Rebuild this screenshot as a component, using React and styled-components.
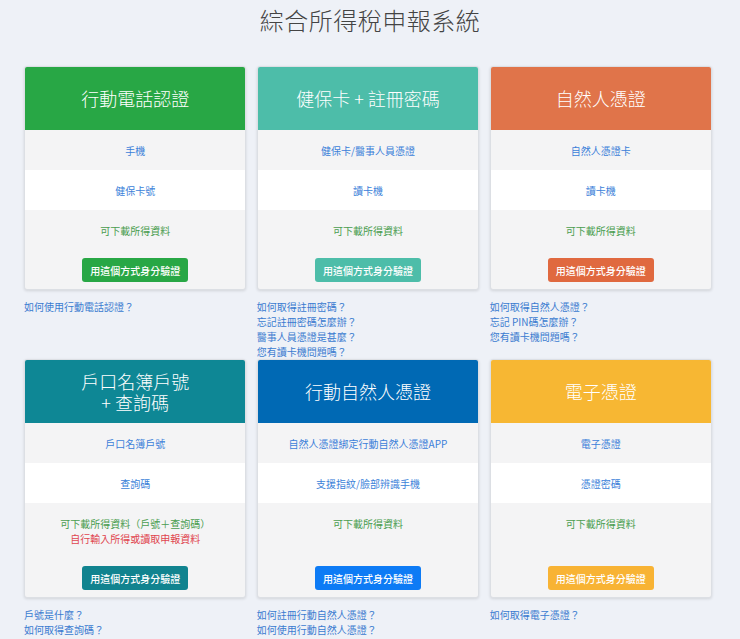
import React from "react";
import styled, { createGlobalStyle } from "styled-components";

const Global = createGlobalStyle`
  html, body { margin: 0; padding: 0; background: #eef1f7; }
  body { font-family: "Noto Sans CJK TC", "Noto Sans", sans-serif; }
`;

const Page = styled.div`
  width: 740px;
  min-height: 639px;
  background: #eef1f7;
  padding: 8px 0 0;
  box-sizing: border-box;
`;

const Title = styled.h1`
  margin: 0 0 34px;
  text-align: center;
  font-size: 24px;
  line-height: 24px;
  font-weight: 300;
  color: #444;
  letter-spacing: 0.5px;
`;

const Grid = styled.div`
  display: grid;
  grid-template-columns: repeat(3, 1fr);
  column-gap: 10.5px;
  width: 688px;
  margin-left: 24px;
`;

const Card = styled.div`
  display: flex;
  flex-direction: column;
  background: #f4f4f5;
  border: 1px solid #dcdfe4;
  border-radius: 3px;
  overflow: hidden;
  box-shadow: 0 1px 3px rgba(0, 0, 0, 0.12);
`;

const Header = styled.div`
  height: 63px;
  background: ${(p) => p.$color};
  color: #fff;
  display: flex;
  flex-direction: column;
  align-items: center;
  justify-content: center;
  text-align: center;
  font-size: 18px;
  line-height: 21px;
  font-weight: 300;
`;

const Row = styled.div`
  background: ${(p) => (p.$white ? "#ffffff" : "#f4f4f5")};
  padding: 12.5px 8px;
  text-align: center;
  font-size: 10px;
  line-height: 15px;
  color: ${(p) => p.$color || "#3b7fd9"};
  ${(p) => (p.$grow ? "flex: 1;" : "")}
`;

const Line = styled.div`
  color: ${(p) => p.$color};
`;

const ButtonArea = styled.div`
  display: flex;
  justify-content: center;
  padding: 8px 0 7px;
`;

const Button = styled.button`
  background: ${(p) => p.$color};
  color: #fff;
  border: none;
  border-radius: 3px;
  height: 24px;
  padding: 0 8px;
  font-family: "Noto Sans CJK TC", sans-serif;
  font-size: 10px;
  font-weight: 500;
  cursor: pointer;
`;

const Links = styled.div`
  display: flex;
  flex-direction: column;
  padding-top: 9px;
`;

const Link = styled.a`
  font-size: 10px;
  line-height: 15px;
  color: #3a7bd0;
  text-decoration: none;
`;

const BLUE = "#3b7fd9";
const GREEN = "#4a9d4f";
const RED = "#e0454f";

const cards = [
  {
    title: ["行動電話認證"],
    head: "#28a745",
    btn: "#28a745",
    rows: ["手機", "健保卡號"],
    last: [{ t: "可下載所得資料", c: GREEN }],
    links: ["如何使用行動電話認證？"],
  },
  {
    title: ["健保卡 + 註冊密碼"],
    head: "#4dbda9",
    btn: "#4dbda9",
    rows: ["健保卡/醫事人員憑證", "讀卡機"],
    last: [{ t: "可下載所得資料", c: GREEN }],
    links: ["如何取得註冊密碼？", "忘記註冊密碼怎麼辦？", "醫事人員憑證是甚麼？", "您有讀卡機問題嗎？"],
  },
  {
    title: ["自然人憑證"],
    head: "#e0744a",
    btn: "#e0693f",
    rows: ["自然人憑證卡", "讀卡機"],
    last: [{ t: "可下載所得資料", c: GREEN }],
    links: ["如何取得自然人憑證？", "忘記 PIN碼怎麼辦？", "您有讀卡機問題嗎？"],
  },
  {
    title: ["戶口名簿戶號", "+ 查詢碼"],
    head: "#0e8795",
    btn: "#11838f",
    rows: ["戶口名簿戶號", "查詢碼"],
    last: [
      { t: "可下載所得資料（戶號＋查詢碼）", c: GREEN },
      { t: "自行輸入所得或讀取申報資料", c: RED },
    ],
    links: ["戶號是什麼？", "如何取得查詢碼？"],
  },
  {
    title: ["行動自然人憑證"],
    head: "#0069b4",
    btn: "#0d7bf5",
    rows: ["自然人憑證綁定行動自然人憑證APP", "支援指紋/臉部辨識手機"],
    last: [{ t: "可下載所得資料", c: GREEN }],
    links: ["如何註冊行動自然人憑證？", "如何使用行動自然人憑證？"],
  },
  {
    title: ["電子憑證"],
    head: "#f7b733",
    btn: "#f8b334",
    rows: ["電子憑證", "憑證密碼"],
    last: [{ t: "可下載所得資料", c: GREEN }],
    links: ["如何取得電子憑證？"],
  },
];

function MethodCard({ c }) {
  return (
    <Card>
      <Header $color={c.head}>
        {c.title.map((t, j) => (
          <div key={j}>{t}</div>
        ))}
      </Header>
      <Row $color={BLUE}>{c.rows[0]}</Row>
      <Row $white $color={BLUE}>{c.rows[1]}</Row>
      <Row $grow>
        {c.last.map((l, j) => (
          <Line key={j} $color={l.c}>
            {l.t}
          </Line>
        ))}
      </Row>
      <ButtonArea>
        <Button $color={c.btn}>用這個方式身分驗證</Button>
      </ButtonArea>
    </Card>
  );
}

function LinkList({ c }) {
  return (
    <Links>
      {c.links.map((l, j) => (
        <Link key={j} href="#">
          {l}
        </Link>
      ))}
    </Links>
  );
}

export default function App() {
  const rows = [cards.slice(0, 3), cards.slice(3, 6)];
  return (
    <Page>
      <Global />
      <Title>綜合所得稅申報系統</Title>
      <Grid>
        {rows.map((r, ri) => (
          <React.Fragment key={ri}>
            {r.map((c, i) => (
              <MethodCard key={"c" + i} c={c} />
            ))}
            {r.map((c, i) => (
              <LinkList key={"l" + i} c={c} />
            ))}
          </React.Fragment>
        ))}
      </Grid>
    </Page>
  );
}
